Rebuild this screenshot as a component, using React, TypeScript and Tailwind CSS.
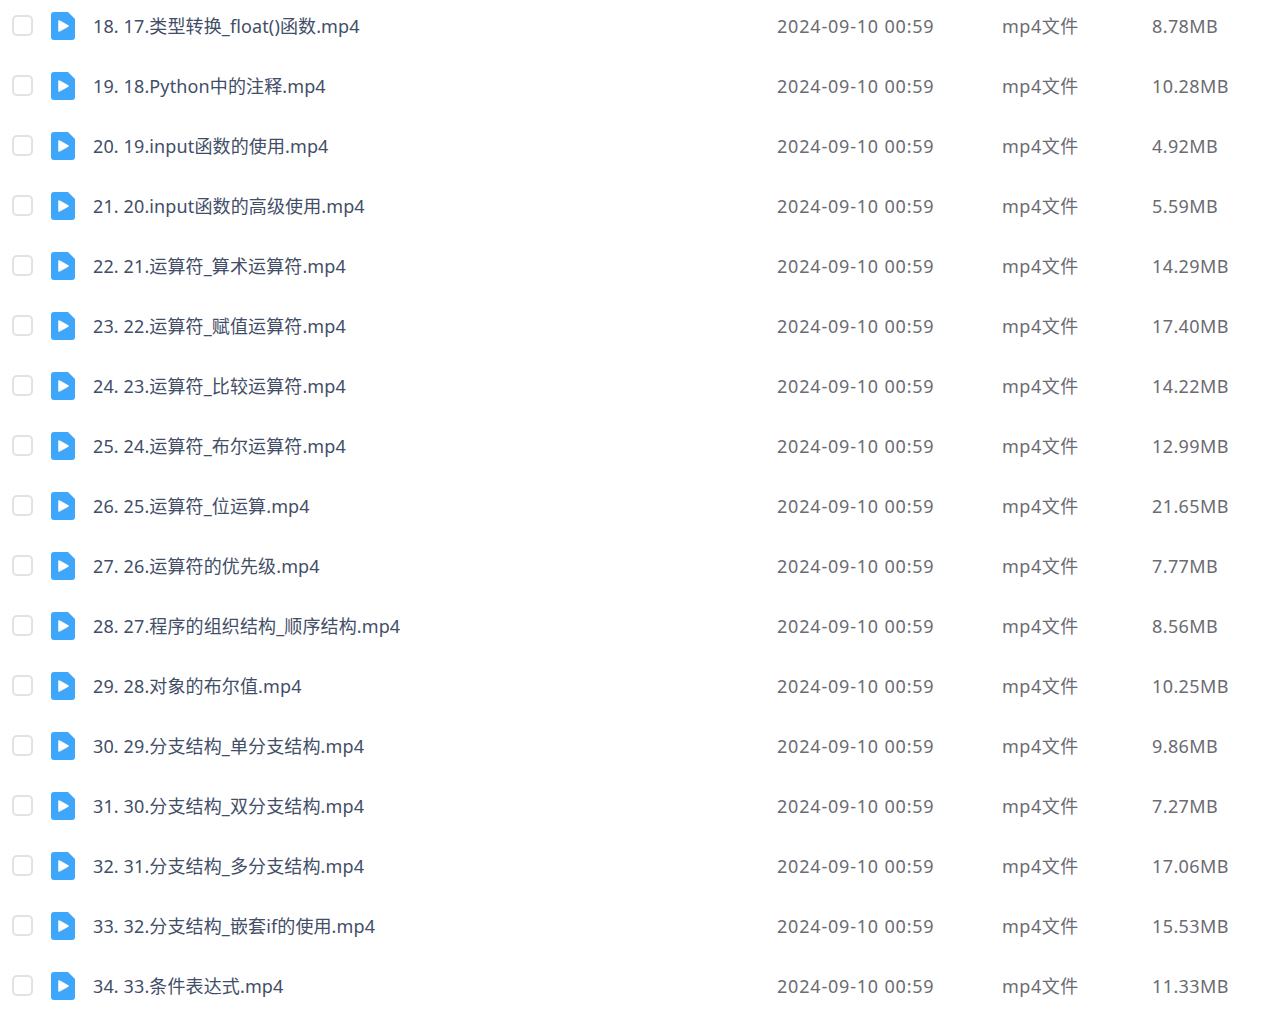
const files = [
  ["18. 17.类型转换_float()函数.mp4", "8.78MB"],
  ["19. 18.Python中的注释.mp4", "10.28MB"],
  ["20. 19.input函数的使用.mp4", "4.92MB"],
  ["21. 20.input函数的高级使用.mp4", "5.59MB"],
  ["22. 21.运算符_算术运算符.mp4", "14.29MB"],
  ["23. 22.运算符_赋值运算符.mp4", "17.40MB"],
  ["24. 23.运算符_比较运算符.mp4", "14.22MB"],
  ["25. 24.运算符_布尔运算符.mp4", "12.99MB"],
  ["26. 25.运算符_位运算.mp4", "21.65MB"],
  ["27. 26.运算符的优先级.mp4", "7.77MB"],
  ["28. 27.程序的组织结构_顺序结构.mp4", "8.56MB"],
  ["29. 28.对象的布尔值.mp4", "10.25MB"],
  ["30. 29.分支结构_单分支结构.mp4", "9.86MB"],
  ["31. 30.分支结构_双分支结构.mp4", "7.27MB"],
  ["32. 31.分支结构_多分支结构.mp4", "17.06MB"],
  ["33. 32.分支结构_嵌套if的使用.mp4", "15.53MB"],
  ["34. 33.条件表达式.mp4", "11.33MB"],
];

function VideoIcon() {
  return (
    <svg width="24" height="28" viewBox="0 0 24 28" className="shrink-0">
      <path d="M3 0H17L24 7V25a3 3 0 0 1-3 3H3a3 3 0 0 1-3-3V3a3 3 0 0 1 3-3Z" fill="#3ea6fb" />
      <path d="M8 9 17 14 8 19Z" fill="#fff" strokeLinejoin="round" stroke="#fff" strokeWidth="1.5" />
    </svg>
  );
}

export default function App() {
  return (
    <div className="h-[1014px] w-[1282px] overflow-hidden bg-white font-['Noto_Sans','Noto_Sans_CJK_SC',sans-serif] text-[18px]">
      <div className="-mt-1">
        {files.map(([name, size]) => (
          <div key={name} className="flex h-[60px] items-center">
            <div className="mb-px ml-3 h-[21px] w-[21px] shrink-0 rounded-[5px] border-2 border-[#e2e2e2] bg-white" />
            <div className="ml-[18px]">
              <VideoIcon />
            </div>
            <div className="ml-[18px] w-[684px] shrink-0 tracking-[0.12px] text-[#424e67]">{name}</div>
            <div className="w-[225px] shrink-0 tracking-[0.8px] text-[#6b6b73]">2024-09-10 00:59</div>
            <div className="w-[150px] shrink-0 tracking-[0.5px] text-[#6b6b73]">mp4文件</div>
            <div className="tracking-[0.4px] text-[#6b6b73]">{size}</div>
          </div>
        ))}
      </div>
    </div>
  );
}
